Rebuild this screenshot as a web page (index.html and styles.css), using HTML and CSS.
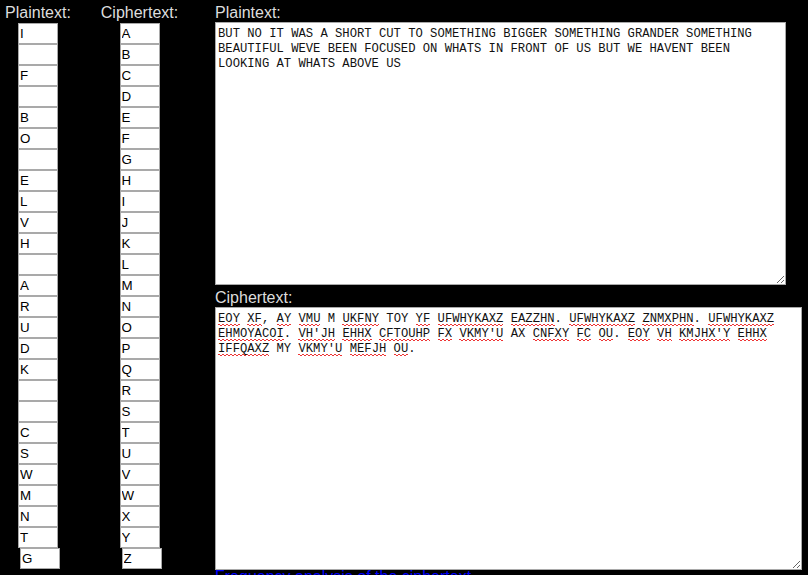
FILE: index.html
```html
<!DOCTYPE html>
<html lang="en">
<head>
<meta charset="utf-8">
<title>Substitution cipher</title>
<link rel="stylesheet" href="styles.css">
</head>
<body>
<main class="page">
  <section class="key-col key-plain">
    <div class="label">Plaintext:</div>
    <input class="cell" value="I">
    <input class="cell" value="">
    <input class="cell" value="F">
    <input class="cell" value="">
    <input class="cell" value="B">
    <input class="cell" value="O">
    <input class="cell" value="">
    <input class="cell" value="E">
    <input class="cell" value="L">
    <input class="cell" value="V">
    <input class="cell" value="H">
    <input class="cell" value="">
    <input class="cell" value="A">
    <input class="cell" value="R">
    <input class="cell" value="U">
    <input class="cell" value="D">
    <input class="cell" value="K">
    <input class="cell" value="">
    <input class="cell" value="">
    <input class="cell" value="C">
    <input class="cell" value="S">
    <input class="cell" value="W">
    <input class="cell" value="M">
    <input class="cell" value="N">
    <input class="cell" value="T">
    <input class="cell cell-last" value="G">
  </section>
  <section class="key-col key-cipher">
    <div class="label">Ciphertext:</div>
    <input class="cell" value="A" readonly>
    <input class="cell" value="B" readonly>
    <input class="cell" value="C" readonly>
    <input class="cell" value="D" readonly>
    <input class="cell" value="E" readonly>
    <input class="cell" value="F" readonly>
    <input class="cell" value="G" readonly>
    <input class="cell" value="H" readonly>
    <input class="cell" value="I" readonly>
    <input class="cell" value="J" readonly>
    <input class="cell" value="K" readonly>
    <input class="cell" value="L" readonly>
    <input class="cell" value="M" readonly>
    <input class="cell" value="N" readonly>
    <input class="cell" value="O" readonly>
    <input class="cell" value="P" readonly>
    <input class="cell" value="Q" readonly>
    <input class="cell" value="R" readonly>
    <input class="cell" value="S" readonly>
    <input class="cell" value="T" readonly>
    <input class="cell" value="U" readonly>
    <input class="cell" value="V" readonly>
    <input class="cell" value="W" readonly>
    <input class="cell" value="X" readonly>
    <input class="cell" value="Y" readonly>
    <input class="cell cell-last" value="Z" readonly>
  </section>
  <section class="text-col">
    <div class="label label-wide">Plaintext:</div>
    <textarea class="pad pad-plain" spellcheck="false">BUT NO IT WAS A SHORT CUT TO SOMETHING BIGGER SOMETHING GRANDER SOMETHING BEAUTIFUL WEVE BEEN FOCUSED ON WHATS IN FRONT OF US BUT WE HAVENT BEEN LOOKING AT WHATS ABOVE US</textarea>
    <div class="label label-wide label-gap">Ciphertext:</div>
    <div class="pad pad-cipher" role="textbox" aria-multiline="true"><span class="sp">EOY</span> <span class="sp">XF</span>, <span class="sp">AY</span> <span class="sp">VMU</span> M <span class="sp">UKFNY</span> TOY <span class="sp">YF</span> <span class="sp">UFWHYKAXZ</span> <span class="sp">EAZZHN</span>. <span class="sp">UFWHYKAXZ</span> <span class="sp">ZNMXPHN</span>. <span class="sp">UFWHYKAXZ</span> <span class="sp">EHMOYACOI</span>. <span class="sp">VH'JH</span> <span class="sp">EHHX</span> <span class="sp">CFTOUHP</span> <span class="sp">FX</span> <span class="sp">VKMY'U</span> AX <span class="sp">CNFXY</span> <span class="sp">FC</span> <span class="sp">OU</span>. <span class="sp">EOY</span> <span class="sp">VH</span> <span class="sp">KMJHX'Y</span> <span class="sp">EHHX</span> <span class="sp">IFFQAXZ</span> MY <span class="sp">VKMY'U</span> <span class="sp">MEFJH</span> <span class="sp">OU</span>.</div>
    <a class="link" href="#">Frequency analysis of the ciphertext</a>
  </section>
</main>
</body>
</html>
```

FILE: styles.css
```css
html, body {
  margin: 0;
  padding: 0;
  background: #000;
  overflow: hidden;
}

body {
  font-family: "Liberation Sans", Arial, sans-serif;
}

.page {
  display: flex;
  align-items: flex-start;
  padding: 4px 0 0 5px;
}

.key-col {
  display: flex;
  flex-direction: column;
  align-items: center;
}

.key-plain {
  width: 66px;
}

.key-cipher {
  width: 77px;
  margin-left: 30px;
}

.label {
  color: #ddd;
  font-size: 16px;
  line-height: 18px;
  height: 19px;
  white-space: nowrap;
}

.label-wide {
  height: 18px;
}

.label-gap {
  margin-top: 4px;
}

.cell {
  box-sizing: border-box;
  display: block;
  width: 40px;
  height: 21px;
  margin: 0;
  padding: 0 1px;
  border: 1px solid #a9a9a9;
  border-radius: 0;
  background: #fff;
  color: #000;
  font-family: "Liberation Sans", Arial, sans-serif;
  font-size: 13.33px;
  outline: none;
}

.cell-last {
  margin-left: 4px;
}

.text-col {
  display: flex;
  flex-direction: column;
  align-items: flex-start;
  margin-left: 37px;
}

.pad {
  box-sizing: border-box;
  display: block;
  margin: 0;
  padding: 4px 2px;
  border: 1px solid #a9a9a9;
  border-radius: 0;
  background: #fff;
  color: #111;
  font-family: "Liberation Mono", "DejaVu Sans Mono", monospace;
  font-size: 12.2px;
  line-height: 15px;
  resize: both;
  outline: none;
}

.pad-plain {
  width: 571px;
  height: 263px;
}

.pad-cipher {
  width: 587px;
  height: 263px;
  overflow: auto;
  white-space: pre-wrap;
  overflow-wrap: break-word;
}

.sp {
  background-image:
    linear-gradient(to right, #e33 50%, transparent 50%),
    linear-gradient(to right, transparent 50%, #e33 50%);
  background-size: 4px 1px, 4px 1px;
  background-position: 0 calc(100% - 1px), 0 100%;
  background-repeat: repeat-x;
}

.link {
  display: block;
  margin-top: -2px;
  color: #00f;
  font-size: 16px;
  line-height: 18px;
  text-decoration: none;
}
```
